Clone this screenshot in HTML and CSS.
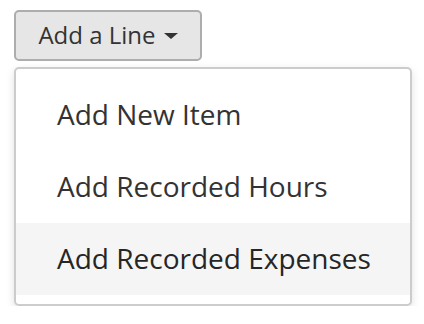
FILE: index.html
```html
<!DOCTYPE html>
<html>
<head>
<meta charset="utf-8">
<link rel="stylesheet" href="styles.css">
</head>
<body>
<div class="wrap">
  <button class="btn">Add a Line <span class="caret"></span></button>
  <ul class="menu">
    <li class="item">Add New Item</li>
    <li class="item">Add Recorded Hours</li>
    <li class="item active">Add Recorded Expenses</li>
  </ul>
</div>
</body>
</html>
```
FILE: styles.css
```css
html, body { margin: 0; padding: 0; background: #fff; }
body { font-family: "Open Sans", "DejaVu Sans", sans-serif; color: #333; }
.wrap { padding: 10px 0 0 14px; display: flex; flex-direction: column; align-items: flex-start; }
.btn {
  box-sizing: border-box;
  height: 51px;
  width: 188px;
  font-family: inherit;
  font-size: 24px;
  color: #333;
  background: #e6e6e6;
  border: 2px solid #adadad;
  border-radius: 5px;
  padding: 0 0 2px 0;
  display: flex;
  align-items: center;
  justify-content: center;
  gap: 8px;
}
.caret {
  width: 0; height: 0;
  border-left: 7px solid transparent;
  border-right: 7px solid transparent;
  border-top: 6px solid #333;
  margin-top: 3px;
}
.menu {
  box-sizing: border-box;
  list-style: none;
  margin: 6px 0 0 0;
  padding: 10px 0 9px;
  width: 398px;
  border: 2px solid #ccc;
  border-radius: 5px;
  background: #fff;
  box-shadow: 0 3px 8px rgba(0,0,0,0.12);
}
.item {
  box-sizing: border-box;
  height: 72px;
  display: flex;
  align-items: center;
  padding: 0 0 2px 41px;
  font-size: 28px;
  color: #333;
}
.item.active { background: #f5f5f5; color: #262626; }
```
